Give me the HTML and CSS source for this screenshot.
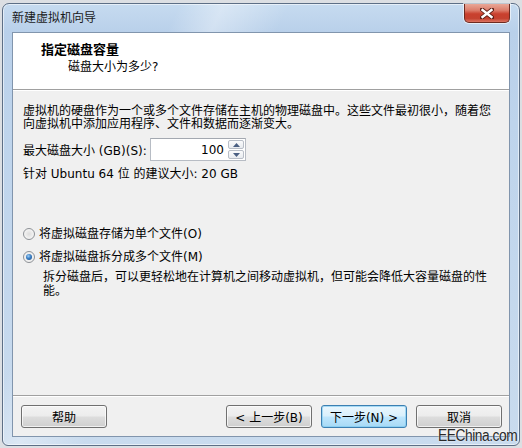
FILE: index.html
```html
<!DOCTYPE html>
<html lang="zh-CN">
<head>
<meta charset="utf-8">
<title>新建虚拟机向导</title>
<link rel="stylesheet" href="styles.css">
</head>
<body>
<div class="window">
  <div class="titlebar">
    <span class="title">新建虚拟机向导</span>
    <div class="close">
      <svg width="14" height="11" viewBox="0 0 14 11">
        <path d="M2 1.5 L12 9.5 M12 1.5 L2 9.5" stroke="#5a1d15" stroke-width="4.2" stroke-linecap="square"/>
        <path d="M2.5 2 L11.5 9 M11.5 2 L2.5 9" stroke="#ffffff" stroke-width="2.4" stroke-linecap="square"/>
      </svg>
    </div>
  </div>
  <div class="client">
    <div class="header">
      <div class="h-title">指定磁盘容量</div>
      <div class="h-sub">磁盘大小为多少?</div>
    </div>
    <div class="content">
      <p class="intro">虚拟机的硬盘作为一个或多个文件存储在主机的物理磁盘中。这些文件最初很小，随着您<br>向虚拟机中添加应用程序、文件和数据而逐渐变大。</p>
      <div class="size-row">
        <span class="size-label">最大磁盘大小 (GB)(S):</span>
        <div class="spin-input">
          <span class="value">100</span>
          <div class="spinner">
            <span class="spin-btn up"><svg width="7" height="4" viewBox="0 0 7 4"><path d="M0 4 L3.5 0 L7 4 Z" fill="#4a5f82"/></svg></span>
            <span class="spin-btn down"><svg width="7" height="4" viewBox="0 0 7 4"><path d="M0 0 L3.5 4 L7 0 Z" fill="#4a5f82"/></svg></span>
          </div>
        </div>
      </div>
      <div class="recommend">针对 Ubuntu 64 位 的建议大小: 20 GB</div>
      <div class="radio-row first"><span class="radio"></span>将虚拟磁盘存储为单个文件(O)</div>
      <div class="radio-row"><span class="radio checked"></span>将虚拟磁盘拆分成多个文件(M)</div>
      <p class="desc">拆分磁盘后，可以更轻松地在计算机之间移动虚拟机，但可能会降低大容量磁盘的性<br>能。</p>
    </div>
    <div class="footer">
      <button class="btn">帮助</button>
      <button class="btn back">&lt; 上一步(B)</button>
      <button class="btn default">下一步(N) &gt;</button>
      <button class="btn">取消</button>
    </div>
  </div>
</div>
<div class="watermark">EEChina.com</div>
</body>
</html>
```

FILE: styles.css
```css
html, body {
  margin: 0;
  padding: 0;
}
body {
  background: #dcdfe3;
  font-family: "DejaVu Sans", "Noto Sans CJK SC", sans-serif;
  font-size: 12px;
  color: #000;
  width: 522px;
  height: 448px;
  overflow: hidden;
  position: relative;
}
.window {
  box-sizing: border-box;
  margin: 3px 0 0 2px;
  width: 518px;
  height: 443px;
  border: 1px solid #5d6f86;
  border-radius: 7px 7px 6px 6px;
  padding: 0 9px 8px 9px;
  display: flex;
  flex-direction: column;
  background:
    linear-gradient(115deg, rgba(255,255,255,0) 0, rgba(255,255,255,0) 160px, rgba(255,255,255,0.35) 200px, rgba(255,255,255,0) 260px, rgba(255,255,255,0) 100%),
    linear-gradient(180deg, #c6dbf0 0, #b9d0ea 28px, #bed4ec 120px, #c9dbee 100%);
  box-shadow: inset 0 0 0 1px rgba(255,255,255,0.55);
}
.titlebar {
  height: 28px;
  display: flex;
  align-items: flex-start;
  flex: none;
}
.title {
  padding-top: 7px;
  line-height: 14px;
  font-size: 12px;
  color: #1a1a1a;
}
.close {
  margin-left: auto;
  box-sizing: border-box;
  width: 46px;
  height: 19px;
  border: 1px solid #6e2a20;
  border-top: none;
  border-radius: 0 0 5px 5px;
  background: linear-gradient(180deg, #e9a797 0, #dc7d6b 35%, #c9402e 55%, #c4412f 80%, #dc7462 100%);
  box-shadow: 0 0 0 1px rgba(255,255,255,0.6);
  display: flex;
  align-items: center;
  justify-content: center;
}
.client {
  flex: 1;
  display: flex;
  flex-direction: column;
  border: 1px solid #8195ad;
  background: #f0f0f0;
}
.header {
  flex: none;
  height: 56px;
  box-sizing: border-box;
  background: #fff;
  border-bottom: 1px solid #a0a0a0;
  padding: 9px 0 0 28px;
  height: 57px;
}
.h-title {
  font-weight: bold;
  font-size: 13px;
  line-height: 16px;
}
.h-sub {
  margin-top: 1px;
  padding-left: 27px;
  line-height: 16px;
}
.content {
  flex: 1;
  padding: 14px 0 0 10px;
  border-top: 1px solid #fff;
}
.intro {
  margin: 0;
  line-height: 13px;
}
.size-row {
  margin-top: 7px;
  display: flex;
  align-items: center;
  height: 23px;
}
.size-label {
  width: 127px;
  white-space: nowrap;
}
.spin-input {
  box-sizing: border-box;
  width: 96px;
  height: 23px;
  border: 1px solid #b7bcc4;
  border-top-color: #a3a8b0;
  background: #fff;
  display: flex;
  align-items: center;
  justify-content: flex-end;
  padding-right: 1px;
}
.value {
  padding-right: 4px;
}
.spinner {
  display: flex;
  flex-direction: column;
  gap: 1px;
}
.spin-btn {
  box-sizing: border-box;
  width: 16px;
  height: 9px;
  border: 1px solid #b8bec7;
  border-radius: 2px;
  background: linear-gradient(180deg, #fafbfc 0, #e8ebef 100%);
  display: flex;
  align-items: center;
  justify-content: center;
}
.recommend {
  margin-top: 7px;
  line-height: 13px;
}
.radio-row {
  display: flex;
  align-items: center;
  height: 16px;
  line-height: 16px;
  margin-top: 7px;
}
.radio-row.first {
  margin-top: 45px;
}
.radio {
  box-sizing: border-box;
  width: 12px;
  height: 12px;
  border-radius: 50%;
  border: 1px solid #8d9196;
  background: radial-gradient(circle at 50% 50%, #dcdcdc 0, #eeeeee 50%, #fafafa 100%);
  margin-right: 4px;
  position: relative;
  flex: none;
}
.radio.checked::after {
  content: "";
  position: absolute;
  left: 2px;
  top: 2px;
  width: 6px;
  height: 6px;
  border-radius: 50%;
  background: radial-gradient(circle at 40% 35%, #9fd0f8 0, #3b7fc4 45%, #1a4d88 100%);
}
.desc {
  margin: 5px 0 0 20px;
  line-height: 14px;
}
.footer {
  flex: none;
  border-top: 1px solid #a0a0a0;
  padding: 9px 7px 8px 8px;
  display: flex;
  gap: 9px;
  box-shadow: inset 0 1px 0 #fff;
}
.btn {
  box-sizing: border-box;
  width: 86px;
  height: 23px;
  padding: 0;
  font-family: "DejaVu Sans", "Noto Sans CJK SC", sans-serif;
  font-size: 12px;
  color: #000;
  border: 1px solid #707070;
  border-radius: 3px;
  background: linear-gradient(180deg, #f3f3f3 0, #ececec 48%, #dddddd 52%, #cfcfcf 100%);
  box-shadow: inset 0 0 0 1px rgba(255,255,255,0.7);
}
.btn.back {
  margin-left: auto;
}
.btn.default {
  border-color: #3c7fb1;
  background: linear-gradient(180deg, #eaf6fd 0, #d9f0fc 48%, #bee6fd 52%, #a7d9f5 100%);
  box-shadow: inset 0 0 0 1px rgba(120,200,240,0.6);
}
.watermark {
  position: absolute;
  right: 5px;
  top: 427px;
  font-family: "Liberation Sans", sans-serif;
  font-size: 16px;
  line-height: 18px;
  color: #2a2a2a;
  letter-spacing: -0.5px;
  transform: scaleX(0.86);
  transform-origin: right center;
  text-shadow: 0 0 2px #fff;
}
```
